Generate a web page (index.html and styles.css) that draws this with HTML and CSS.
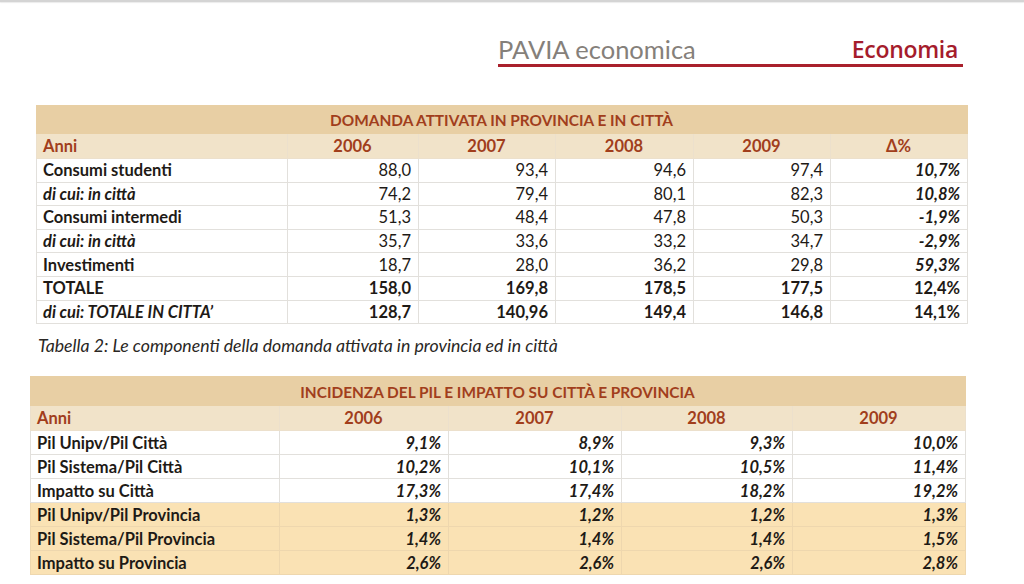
FILE: index.html
```html
<!DOCTYPE html>
<html lang="it">
<head>
<meta charset="utf-8">
<title>PAVIA economica - Economia</title>
<link rel="stylesheet" href="styles.css">
</head>
<body>
<div class="topline"></div>
<header class="masthead">
  <span class="mag">PAVIA economica</span>
  <span class="section">Economia</span>
</header>

<table class="tbl t1">
  <colgroup>
    <col style="width:251px"><col style="width:131px"><col style="width:137px"><col style="width:138px"><col style="width:137px"><col style="width:137px">
  </colgroup>
  <tr class="title"><td colspan="6">DOMANDA ATTIVATA IN PROVINCIA E IN CITTÀ</td></tr>
  <tr class="head"><td class="lbl">Anni</td><td>2006</td><td>2007</td><td>2008</td><td>2009</td><td>Δ%</td></tr>
  <tr><td class="lbl">Consumi studenti</td><td>88,0</td><td>93,4</td><td>94,6</td><td>97,4</td><td class="bi">10,7%</td></tr>
  <tr><td class="lbl it">di cui: in città</td><td>74,2</td><td>79,4</td><td>80,1</td><td>82,3</td><td class="bi">10,8%</td></tr>
  <tr><td class="lbl">Consumi intermedi</td><td>51,3</td><td>48,4</td><td>47,8</td><td>50,3</td><td class="bi">-1,9%</td></tr>
  <tr><td class="lbl it">di cui: in città</td><td>35,7</td><td>33,6</td><td>33,2</td><td>34,7</td><td class="bi">-2,9%</td></tr>
  <tr><td class="lbl">Investimenti</td><td>18,7</td><td>28,0</td><td>36,2</td><td>29,8</td><td class="bi">59,3%</td></tr>
  <tr class="bold"><td class="lbl">TOTALE</td><td>158,0</td><td>169,8</td><td>178,5</td><td>177,5</td><td>12,4%</td></tr>
  <tr class="bold"><td class="lbl it">di cui: TOTALE IN CITTA’</td><td>128,7</td><td>140,96</td><td>149,4</td><td>146,8</td><td>14,1%</td></tr>
</table>

<p class="caption">Tabella 2: Le componenti della domanda attivata in provincia ed in città</p>

<table class="tbl t2">
  <colgroup>
    <col style="width:249px"><col style="width:169px"><col style="width:173px"><col style="width:171px"><col style="width:173px">
  </colgroup>
  <tr class="title"><td colspan="5">INCIDENZA DEL PIL E IMPATTO SU CITTÀ E PROVINCIA</td></tr>
  <tr class="head"><td class="lbl">Anni</td><td>2006</td><td>2007</td><td>2008</td><td>2009</td></tr>
  <tr class="bi"><td class="lbl">Pil Unipv/Pil Città</td><td>9,1%</td><td>8,9%</td><td>9,3%</td><td>10,0%</td></tr>
  <tr class="bi"><td class="lbl">Pil Sistema/Pil Città</td><td>10,2%</td><td>10,1%</td><td>10,5%</td><td>11,4%</td></tr>
  <tr class="bi"><td class="lbl">Impatto su Città</td><td>17,3%</td><td>17,4%</td><td>18,2%</td><td>19,2%</td></tr>
  <tr class="bi prov"><td class="lbl">Pil Unipv/Pil Provincia</td><td>1,3%</td><td>1,2%</td><td>1,2%</td><td>1,3%</td></tr>
  <tr class="bi prov"><td class="lbl">Pil Sistema/Pil Provincia</td><td>1,4%</td><td>1,4%</td><td>1,4%</td><td>1,5%</td></tr>
  <tr class="bi prov"><td class="lbl">Impatto su Provincia</td><td>2,6%</td><td>2,6%</td><td>2,6%</td><td>2,8%</td></tr>
</table>
</body>
</html>
```
FILE: styles.css
```css
html, body {
  margin: 0;
  padding: 0;
  background: #ffffff;
}
body {
  width: 1024px;
  height: 584px;
  overflow: hidden;
  font-family: Lato, "Noto Sans", sans-serif;
  color: #1e1a16;
}
.topline {
  height: 2px;
  background: #d4d4d4;
  box-shadow: 0 1px 1px rgba(0,0,0,0.08);
}
.masthead {
  display: flex;
  justify-content: space-between;
  align-items: flex-end;
  margin: 31px 0 0 498px;
  width: 465px;
  height: 31px;
  border-bottom: 3px solid #a9202c;
}
.mag {
  font-family: Lato, sans-serif;
  font-size: 25.5px;
  color: #85807a;
  line-height: 29px;
  letter-spacing: 0;
}
.section {
  font-family: "Open Sans", sans-serif;
  font-weight: 600;
  font-size: 23px;
  color: #a51c2c;
  line-height: 30px;
  margin-right: 5px;
  letter-spacing: -0.3px;
}
.tbl {
  border-collapse: collapse;
  table-layout: fixed;
  font-size: 16.5px;
}
.t1 {
  margin: 38px 0 0 36px;
  width: 931px;
}
.t2 {
  margin: 18px 0 0 30px;
  width: 935px;
}
.tbl td {
  border: 1px solid #e2e0dc;
  padding: 0 7px 0 6px;
  height: 23px;
  line-height: 22px;
  text-align: right;
  white-space: nowrap;
  overflow: hidden;
}
.t1 td {
  height: 22.6px;
}
.tbl tr.title td {
  background: #e8cfa4;
  color: #a13e1c;
  font-weight: 700;
  font-size: 15.4px;
  text-align: center;
  height: 26px;
  border-color: #e8cfa4;
  padding-top: 1px;
}
.t2 tr.title td {
  height: 27px;
}
.tbl tr.head td {
  background: #f1e3c9;
  color: #a13e1c;
  font-weight: 700;
  text-align: center;
  height: 24px;
  border-color: #ece0cc;
}
.tbl tr.head td.lbl {
  text-align: left;
}
.tbl td.lbl {
  text-align: left;
  font-weight: 700;
}
.tbl td.it {
  font-style: italic;
}
.tbl td.bi,
.tbl tr.bi td {
  font-weight: 700;
  font-style: italic;
}
.tbl tr.bold td {
  font-weight: 700;
}
.tbl tr.prov td {
  background: #fae2b4;
  border-color: #eed7ae;
}
.t2 tr.bi td.lbl {
  font-style: normal;
}
.caption {
  margin: 10px 0 0 38px;
  font-family: Lato, sans-serif;
  font-style: italic;
  font-size: 17.7px;
  color: #2a2724;
  line-height: 24px;
}
```
